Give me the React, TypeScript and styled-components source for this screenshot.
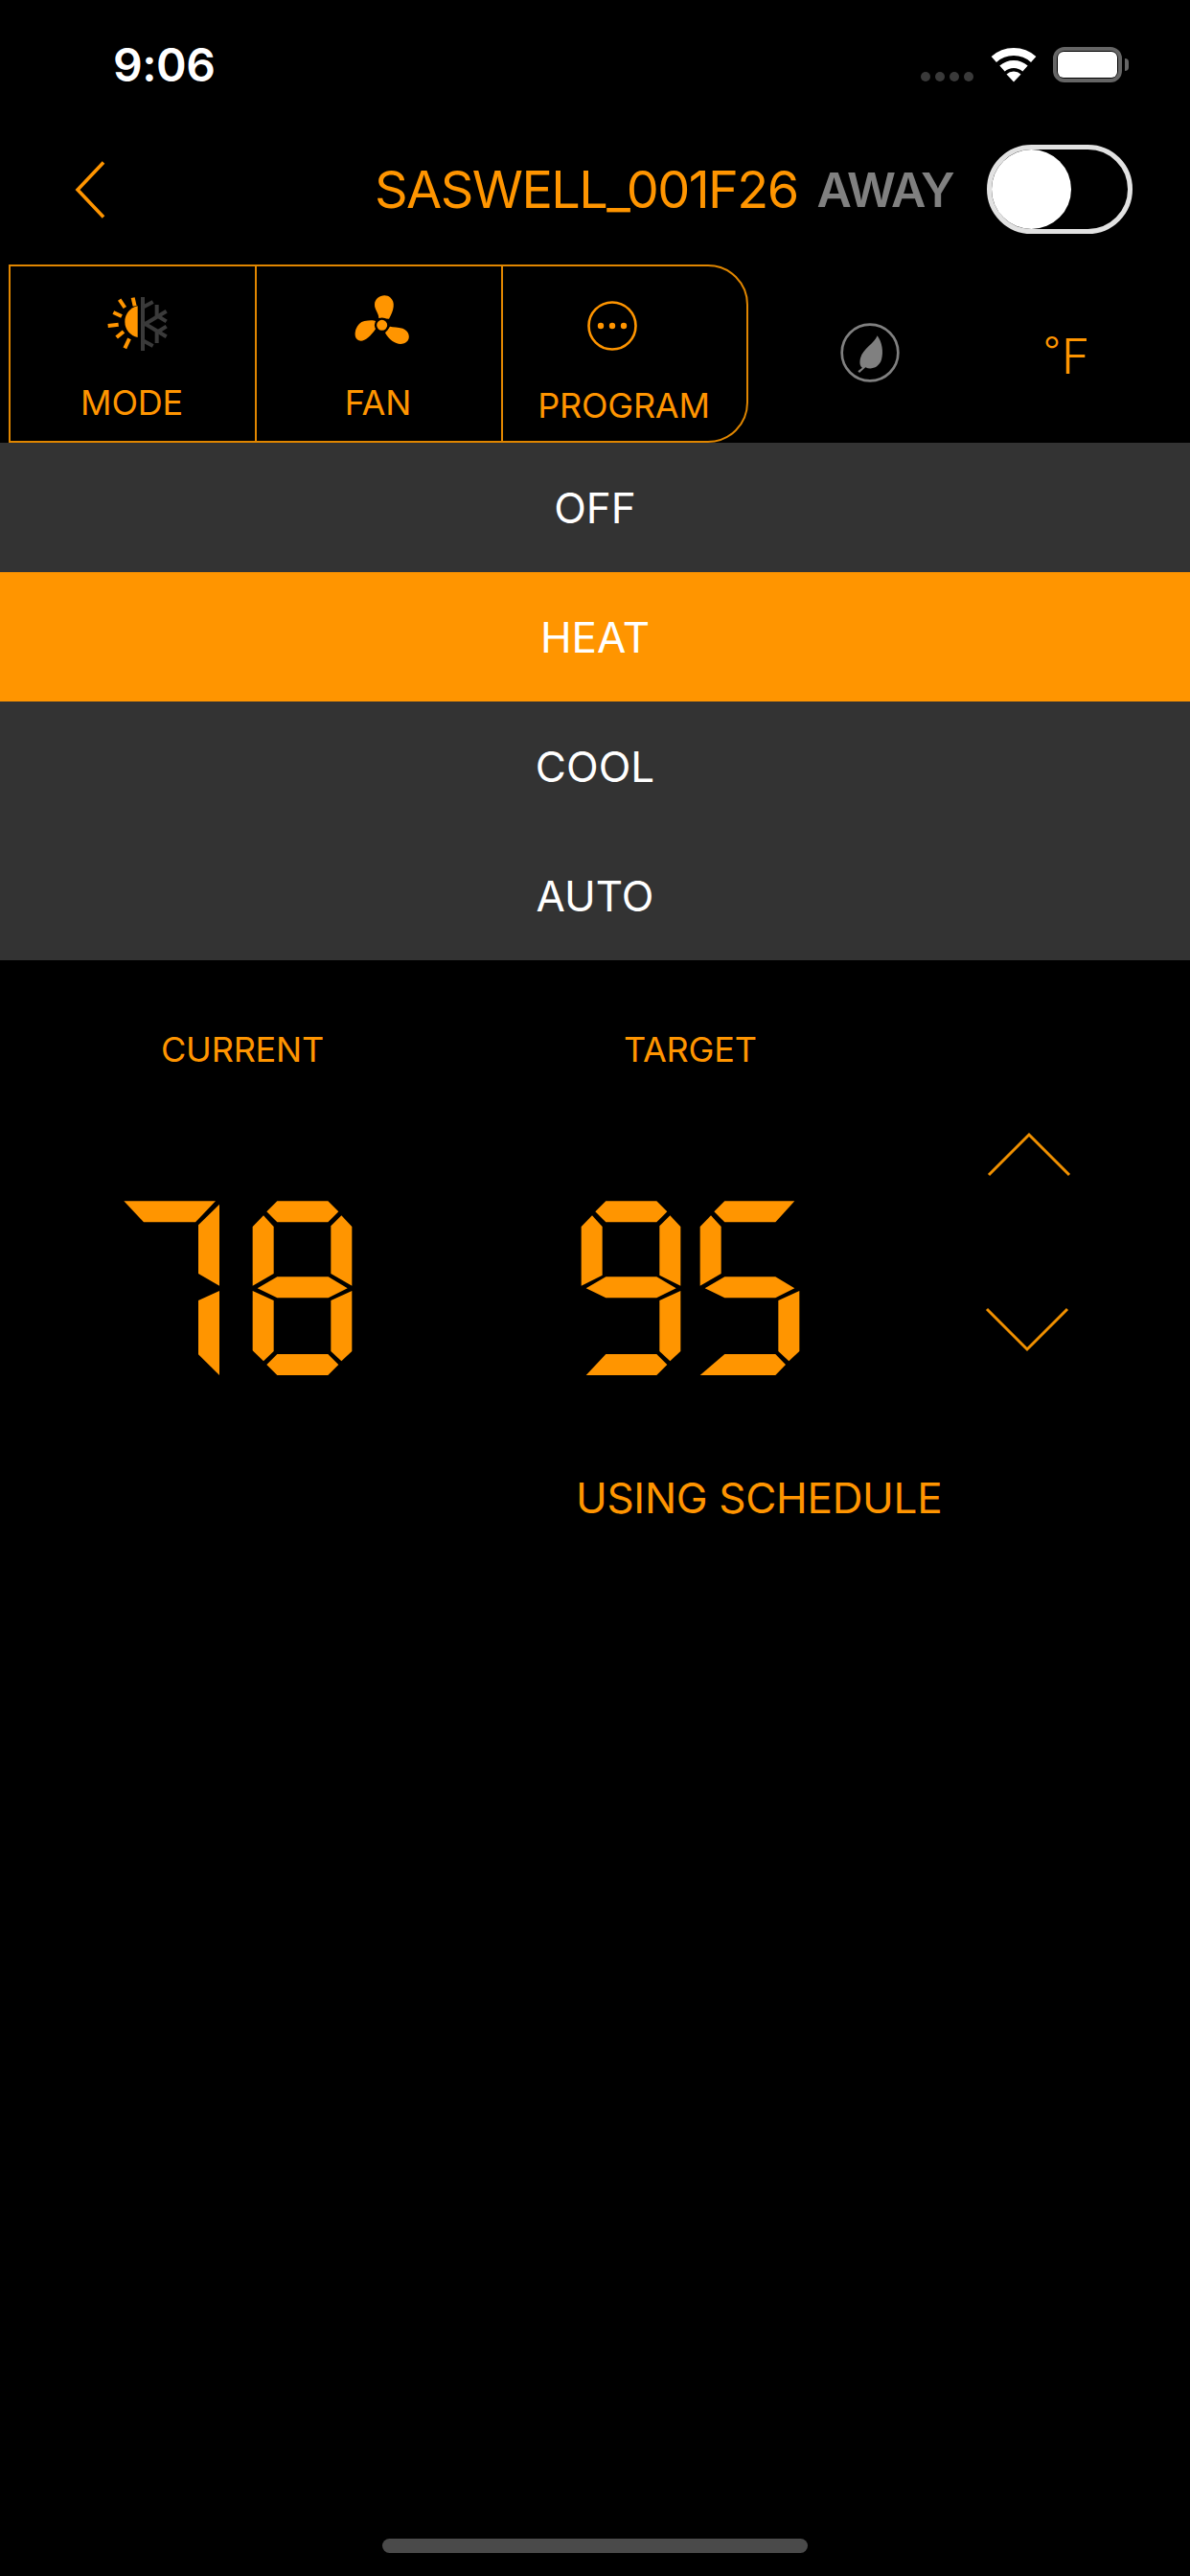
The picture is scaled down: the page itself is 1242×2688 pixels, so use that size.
import styled, { createGlobalStyle } from 'styled-components'

const ORANGE = '#ff9500'
const GRAY = '#808080'

const GlobalStyle = createGlobalStyle`
  html, body { margin: 0; padding: 0; background: #000; }
  * { box-sizing: border-box; }
  svg { display: block; }
`

const Screen = styled.div`
  width: 1242px;
  height: 2688px;
  background: #000;
  display: flex;
  flex-direction: column;
  font-family: Inter, "Liberation Sans", sans-serif;
  overflow: hidden;
`

/* status bar */
const StatusBar = styled.div`
  height: 120px;
  padding: 40px 64px 0 118px;
  display: flex;
  align-items: flex-start;
  justify-content: space-between;
`
const Clock = styled.div`
  color: #fff;
  font-size: 48px;
  font-weight: 600;
  line-height: 56px;
  letter-spacing: -0.5px;
`
const StatusIcons = styled.div`
  display: flex;
  align-items: flex-start;
  padding-top: 9px;
`
const SignalDots = styled.div`
  display: flex;
  gap: 5px;
  margin: 26px 18px 0 0;
`
const SignalDot = styled.span`
  width: 10px;
  height: 10px;
  border-radius: 50%;
  background: #3a3a3a;
`
const Battery = styled.div`
  width: 72px;
  height: 37px;
  margin-left: 17px;
  padding: 1px;
  border: 4px solid #666;
  border-radius: 12px;
  display: flex;
`
const BatteryFill = styled.div`
  flex: 1;
  background: #fff;
  border-radius: 6px;
`
const BatteryCap = styled.div`
  width: 4px;
  height: 13px;
  margin: 12px 0 0 3px;
  background: #666;
  border-radius: 0 4px 4px 0;
`

/* nav */
const NavBar = styled.div`
  height: 156px;
  padding: 0 60px 1px 77px;
  display: flex;
  align-items: center;
  justify-content: space-between;
`
const NavRight = styled.div`
  display: flex;
  align-items: center;
`
const DeviceName = styled.div`
  color: ${ORANGE};
  font-size: 54px;
  font-weight: 400;
  letter-spacing: -1.6px;
  line-height: 64px;
`
const AwayLabel = styled.div`
  color: ${GRAY};
  font-size: 50px;
  font-weight: 600;
  letter-spacing: -1.6px;
  line-height: 64px;
  margin: 0 35px 0 20px;
`
const Switch = styled.div`
  width: 152px;
  height: 93px;
  border: 5px solid #e2e2e2;
  border-radius: 47px;
  display: flex;
  align-items: center;
  background: #000;
`
const SwitchKnob = styled.div`
  width: 83px;
  height: 83px;
  border-radius: 50%;
  background: #fff;
`

/* tabs */
const TabRow = styled.div`
  height: 186px;
  padding-left: 9px;
  display: flex;
  align-items: stretch;
`
const Tab = styled.div<{ $first?: boolean; $last?: boolean }>`
  width: ${p => (p.$last ? '258px' : '259px')};
  margin-left: ${p => (p.$first ? '0' : '-2px')};
  border: 2px solid #e08600;
  border-radius: ${p => (p.$last ? '0 42px 42px 0' : '0')};
  display: flex;
  flex-direction: column;
  align-items: center;
  color: ${ORANGE};
`
const TabIcon = styled.div`
  height: 100px;
  margin-top: 2px;
  display: flex;
  align-items: center;
  justify-content: center;
`
const TabLabel = styled.div<{ $low?: boolean }>`
  font-size: 36px;
  line-height: 44px;
  margin-top: ${p => (p.$low ? '21px' : '18px')};
  margin-right: 2px;
  letter-spacing: -0.2px;
`
const EcoCell = styled.div`
  width: 254px;
  display: flex;
  align-items: center;
  justify-content: center;
  padding-bottom: 2px;
`
const UnitCell = styled.div`
  width: 152px;
  padding: 6px 0 0 4px;
  display: flex;
  align-items: center;
  justify-content: center;
  color: ${ORANGE};
  font-size: 50px;
  font-weight: 300;
  line-height: 60px;
`
const Degree = styled.span`
  font-size: 40px;
  line-height: 60px;
  margin: -12px 1px 0 0;
`

/* mode list */
const ModeList = styled.div`
  display: flex;
  flex-direction: column;
  background: #333;
`
const ModeRow = styled.div<{ $active?: boolean }>`
  height: 135px;
  display: flex;
  align-items: center;
  justify-content: center;
  color: #fff;
  font-size: 44px;
  background: ${p => (p.$active ? ORANGE : 'transparent')};
`

/* temperature readouts */
const Readouts = styled.div`
  padding: 68px 0 0 100px;
  display: grid;
  grid-template-columns: 480px 420px 150px;
  grid-template-rows: 50px 290px auto;
  row-gap: 40px;
`
const ReadoutLabel = styled.div<{ $indent: number }>`
  color: ${ORANGE};
  font-size: 36px;
  line-height: 50px;
  padding-left: ${p => p.$indent}px;
  letter-spacing: -0.2px;
`
const DigitsBox = styled.div`
  padding-top: 60px;
`
const Stepper = styled.div`
  grid-column: 3;
  grid-row: 1 / span 2;
  align-self: end;
  height: 290px;
`
const ScheduleNote = styled.div`
  grid-column: 2 / span 2;
  grid-row: 3;
  margin-top: 46px;
  padding-left: 21px;
  color: ${ORANGE};
  font-size: 44px;
  line-height: 54px;
  letter-spacing: -0.3px;
  white-space: nowrap;
`

const HomeBar = styled.div`
  width: 444px;
  height: 15px;
  margin: auto auto 24px;
  border-radius: 8px;
  background: #4a4a4a;
`

const WifiIcon = () => (
  <svg width="48" height="37" viewBox="0 0 48 37" fill="none" stroke="#fff" strokeWidth="8">
    <path d="M3.3 13A31 31 0 0 1 44.7 13" />
    <path d="M12 22.6A18 18 0 0 1 36 22.6" />
    <path d="M24 36.5L16.5 28.5A11 11 0 0 1 31.5 28.5Z" fill="#fff" stroke="none" />
  </svg>
)

const BackChevron = () => (
  <svg width="34" height="60" viewBox="0 0 34 60" fill="none" stroke={ORANGE} strokeWidth="3.6">
    <path d="M31 1.5L4 30L31 58.5" />
  </svg>
)

const ModeIcon = () => (
  <svg width="120" height="100" viewBox="-36 0 360 300">
    <path d="M158 118A50 50 0 0 0 158 216Z" fill={ORANGE} />
    <g stroke={ORANGE} strokeWidth="12" fill="none">
      <path d="M143 92L149 118" />
      <path d="M101 98L118 123" />
      <path d="M82 138L108 150" />
      <path d="M65 180L98 176" />
      <path d="M92 216L114 198" />
      <path d="M118 250L132 220" />
    </g>
    <g stroke="#3a3a3a" strokeWidth="12" fill="none">
      <path d="M174 90V258" />
      <path d="M174 122L206 105" />
      <path d="M174 226L206 243" />
      <path d="M178 176L248 134" />
      <path d="M178 172L248 214" />
      <path d="M218 114V152" />
      <path d="M218 196V234" />
      <path d="M222 150L248 166" />
      <path d="M222 198L248 182" />
    </g>
  </svg>
)

const FanIcon = () => (
  <svg width="120" height="100" viewBox="-18 -30 360 300" fill={ORANGE}>
    <path d="M192 128C208 100 212 76 197 62C178 46 148 60 147 82C146 100 160 110 160 126Z" />
    <path d="M150 160C130 190 106 206 92 192C78 178 90 140 115 135C130 132 145 132 150 135Z" />
    <path d="M180 172C195 200 225 216 245 202C262 190 255 165 235 158C220 153 205 155 195 152Z" />
    <circle cx="170" cy="148" r="20" stroke="#000" strokeWidth="7" />
  </svg>
)

const ProgramIcon = () => (
  <svg width="100" height="100" viewBox="-11 -34 100 100" fill={ORANGE}>
    <circle cx="26" cy="26" r="24.5" fill="none" stroke={ORANGE} strokeWidth="2.6" />
    <circle cx="14" cy="26" r="3.2" />
    <circle cx="26" cy="26" r="3.2" />
    <circle cx="38" cy="26" r="3.2" />
  </svg>
)

const EcoIcon = () => (
  <svg width="64" height="64" viewBox="286 227 192 192">
    <circle cx="382" cy="323" r="88" fill="none" stroke={GRAY} strokeWidth="8" />
    <path
      d="M405 270C395 295 360 310 352 340C348 358 352 366 358 370L344 381L349 386L368 369C385 378 410 370 418 345C425 320 420 290 405 270Z"
      fill={GRAY}
    />
  </svg>
)

// segment outlines traced at 3x, one svg per reading
const currentSegments = [
  '88,100 375,100 312,166 150,166',
  '321,175 387,110 387,365 321,327',
  '321,411 387,381 387,645 321,580',
  '535,133 568,100 727,100 760,133 727,166 568,166',
  '491,180 525,145 557,180 557,327 491,365',
  '736,178 769,145 802,180 802,365 736,327',
  '506,373 568,337 728,337 788,373 728,403 568,403',
  '491,381 557,411 557,570 525,601 491,568',
  '736,411 802,381 802,570 769,601 736,570',
  '535,612 568,579 727,579 760,612 727,645 568,645',
]

const targetSegments = [
  '124,133 157,100 316,100 349,133 316,166 157,166',
  '80,180 114,145 146,180 146,332 80,365',
  '325,178 358,145 391,180 391,365 325,332',
  '95,373 157,337 316,337 377,373 316,403 157,403',
  '325,411 391,381 391,570 358,601 325,570',
  '95,645 157,579 316,579 349,612 316,645',
  '496,133 529,100 748,100 688,166 529,166',
  '452,180 486,145 518,180 518,327 452,365',
  '467,373 529,337 688,337 748,373 688,403 529,403',
  '697,411 763,381 763,570 730,601 697,570',
  '452,645 529,579 688,579 720,612 688,645',
]

const Digits = ({ segments }: { segments: string[] }) => (
  <svg width="300" height="230" viewBox="0 0 900 690" fill={ORANGE}>
    {segments.map(points => (
      <polygon key={points} points={points} />
    ))}
  </svg>
)

const StepperArrows = () => (
  <svg width="150" height="270" viewBox="0 0 150 270" fill="none" stroke="#f09000" strokeWidth="3">
    <path d="M32 66L74 24L116 66" />
    <path d="M30 206L72 248L114 206" />
  </svg>
)

export default function App() {
  return (
    <Screen>
      <GlobalStyle />
      <StatusBar>
        <Clock>9:06</Clock>
        <StatusIcons>
          <SignalDots>
            <SignalDot />
            <SignalDot />
            <SignalDot />
            <SignalDot />
          </SignalDots>
          <WifiIcon />
          <Battery>
            <BatteryFill />
          </Battery>
          <BatteryCap />
        </StatusIcons>
      </StatusBar>

      <NavBar>
        <BackChevron />
        <NavRight>
          <DeviceName>SASWELL_001F26</DeviceName>
          <AwayLabel>AWAY</AwayLabel>
          <Switch>
            <SwitchKnob />
          </Switch>
        </NavRight>
      </NavBar>

      <TabRow>
        <Tab $first>
          <TabIcon>
            <ModeIcon />
          </TabIcon>
          <TabLabel>MODE</TabLabel>
        </Tab>
        <Tab>
          <TabIcon>
            <FanIcon />
          </TabIcon>
          <TabLabel>FAN</TabLabel>
        </Tab>
        <Tab $last>
          <TabIcon>
            <ProgramIcon />
          </TabIcon>
          <TabLabel $low>PROGRAM</TabLabel>
        </Tab>
        <EcoCell>
          <EcoIcon />
        </EcoCell>
        <UnitCell>
          <Degree>°</Degree>F
        </UnitCell>
      </TabRow>

      <ModeList>
        <ModeRow>OFF</ModeRow>
        <ModeRow $active>HEAT</ModeRow>
        <ModeRow>COOL</ModeRow>
        <ModeRow>AUTO</ModeRow>
      </ModeList>

      <Readouts>
        <ReadoutLabel $indent={68}>CURRENT</ReadoutLabel>
        <ReadoutLabel $indent={71}>TARGET</ReadoutLabel>
        <DigitsBox>
          <Digits segments={currentSegments} />
        </DigitsBox>
        <DigitsBox>
          <Digits segments={targetSegments} />
        </DigitsBox>
        <Stepper>
          <StepperArrows />
        </Stepper>
        <ScheduleNote>USING SCHEDULE</ScheduleNote>
      </Readouts>

      <HomeBar />
    </Screen>
  )
}
